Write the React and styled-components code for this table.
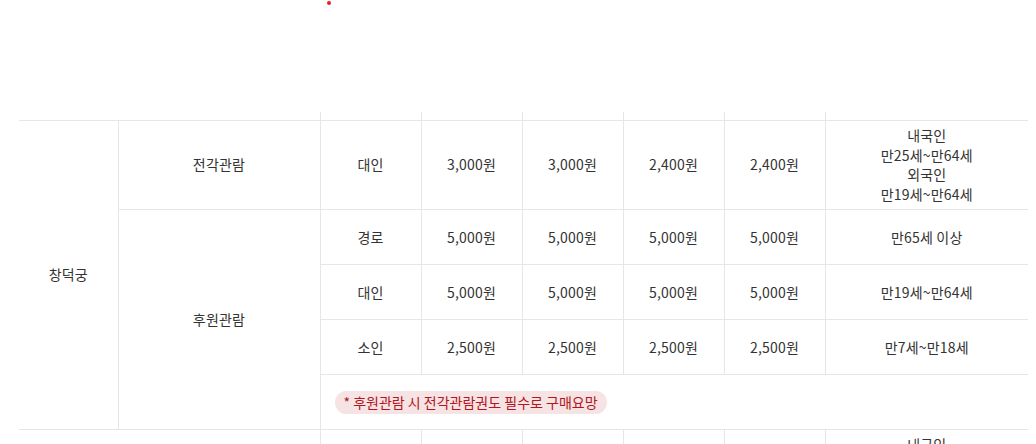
import React from 'react'
import styled, {createGlobalStyle} from 'styled-components'

const GlobalStyle = createGlobalStyle`
  html, body {
    margin: 0;
    padding: 0;
    background: #fff;
    overflow: hidden;
  }
  body {
    font-family: "Noto Sans CJK KR", "Noto Sans", sans-serif;
    color: #333;
  }
`

const Page = styled.div`
  width: 1036px;
  height: 444px;
  overflow: hidden;
`

const TopArea = styled.div`
  height: 111px;
  padding-left: 327px;
  box-sizing: border-box;
`

const Dot = styled.span`
  display: block;
  width: 4px;
  height: 4px;
  margin-top: 1px;
  border-radius: 50%;
  background: #ec1c24;
`

const TableWrap = styled.div`
  padding-left: 19px;
`

const Table = styled.table`
  width: 1009px;
  border-collapse: collapse;
  table-layout: fixed;
  font-size: 14px;
  line-height: 19.6px;
  letter-spacing: 0.2px;
  color: #333;
`

const Cell = styled.td`
  height: 44px;
  padding: 5px;
  text-align: ${p => (p.$left ? 'left' : 'center')};
  vertical-align: ${p => (p.$top ? 'top' : 'middle')};
  border-top: ${p => (p.$noTop ? 'none' : '1px solid #e6e6e6')};
  border-left: ${p => (p.$noLeft ? 'none' : '1px solid #e6e6e6')};
  padding-left: ${p => (p.$left ? '14px' : '5px')};
  white-space: nowrap;
`

const TailCell = styled(Cell)`
  height: 8px;
  padding: 0;
`

const Pill = styled.span`
  display: inline-block;
  height: 23px;
  line-height: 23px;
  padding: 0 9px;
  border-radius: 12px;
  letter-spacing: 0;
  background: #f6e3e3;
  color: #b3141e;
`

const widths = [99, 202, 101, 101, 101, 101, 101, 203]

const Prices = ({values}) => values.map((v, i) => <Cell key={i}>{v}</Cell>)

const App = () => (
  <Page>
    <GlobalStyle />
    <TopArea>
      <Dot />
    </TopArea>
    <TableWrap>
      <Table>
        <colgroup>
          {widths.map((w, i) => (
            <col key={i} style={{width: w}} />
          ))}
        </colgroup>
        <tbody>
          <tr>
            <TailCell colSpan={2} $noTop $noLeft />
            {[0, 1, 2, 3, 4, 5].map(i => (
              <TailCell key={i} $noTop />
            ))}
          </tr>
          <tr>
            <Cell rowSpan={5} $noLeft>
              창덕궁
            </Cell>
            <Cell>전각관람</Cell>
            <Cell>대인</Cell>
            <Prices values={['3,000원', '3,000원', '2,400원', '2,400원']} />
            <Cell>
              내국인
              <br />
              만25세~만64세
              <br />
              외국인
              <br />
              만19세~만64세
            </Cell>
          </tr>
          <tr>
            <Cell rowSpan={4}>후원관람</Cell>
            <Cell>경로</Cell>
            <Prices values={['5,000원', '5,000원', '5,000원', '5,000원']} />
            <Cell>만65세 이상</Cell>
          </tr>
          <tr>
            <Cell>대인</Cell>
            <Prices values={['5,000원', '5,000원', '5,000원', '5,000원']} />
            <Cell>만19세~만64세</Cell>
          </tr>
          <tr>
            <Cell>소인</Cell>
            <Prices values={['2,500원', '2,500원', '2,500원', '2,500원']} />
            <Cell>만7세~만18세</Cell>
          </tr>
          <tr>
            <Cell colSpan={6} $left>
              <Pill>* 후원관람 시 전각관람권도 필수로 구매요망</Pill>
            </Cell>
          </tr>
          <tr>
            <Cell colSpan={2} $noLeft />
            <Cell />
            <Cell />
            <Cell />
            <Cell />
            <Cell />
            <Cell $top>내국인</Cell>
          </tr>
        </tbody>
      </Table>
    </TableWrap>
  </Page>
)

export default App
